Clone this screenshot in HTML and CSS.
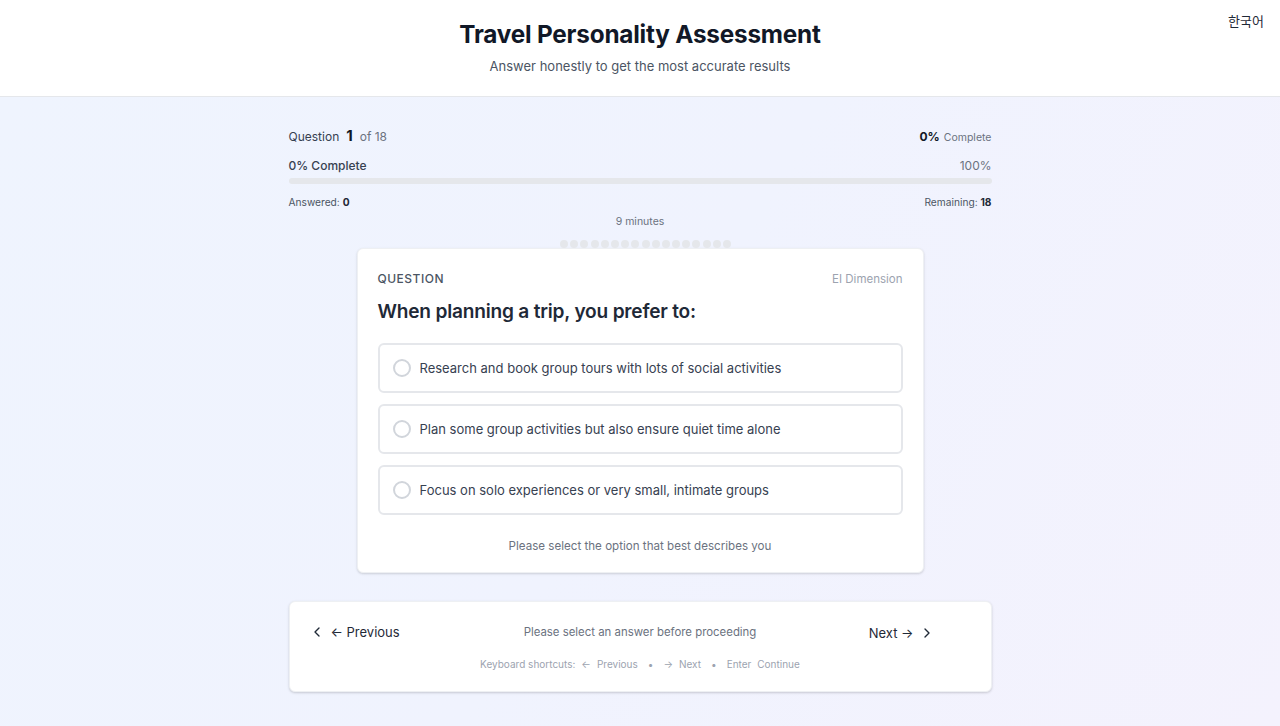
FILE: index.html
```html
<!DOCTYPE html>
<html lang="en">
<head>
<meta charset="utf-8">
<title>Travel Personality Assessment</title>
<link rel="stylesheet" href="styles.css">
</head>
<body>
<header class="site-header">
  <h1 class="title">Travel Personality Assessment</h1>
  <p class="subtitle">Answer honestly to get the most accurate results</p>
  <button class="lang">한국어</button>
</header>
<main class="main">
  <div class="container">
    <div class="row row-top">
      <div class="q-count"><span class="q-label">Question</span><span class="q-num">1</span><span class="q-of">of 18</span></div>
      <div class="pct"><span class="pct-num">0%</span><span class="pct-label">Complete</span></div>
    </div>
    <div class="row row-progress">
      <span class="prog-left">0% Complete</span>
      <span class="prog-right">100%</span>
    </div>
    <div class="bar"><div class="bar-fill" style="width:0%"></div></div>
    <div class="row row-stats">
      <span>Answered: <b>0</b></span>
      <span>Remaining: <b>18</b></span>
    </div>
    <div class="time">9 minutes</div>
    <div class="dots">
      <span></span><span></span><span></span><span></span><span></span><span></span><span></span><span></span><span></span><span></span><span></span><span></span><span></span><span></span><span></span><span></span><span></span>
    </div>
    <section class="card">
      <div class="card-head">
        <span class="eyebrow">QUESTION</span>
        <span class="dim">EI Dimension</span>
      </div>
      <h2 class="question">When planning a trip, you prefer to:</h2>
      <div class="options">
        <label class="option"><span class="radio"></span><span>Research and book group tours with lots of social activities</span></label>
        <label class="option"><span class="radio"></span><span>Plan some group activities but also ensure quiet time alone</span></label>
        <label class="option"><span class="radio"></span><span>Focus on solo experiences or very small, intimate groups</span></label>
      </div>
      <p class="hint">Please select the option that best describes you</p>
    </section>
    <nav class="nav-card">
      <div class="nav-row">
        <button class="nav-btn prev">
          <svg width="16" height="16" viewBox="0 0 24 24" fill="none" stroke="currentColor" stroke-width="2" stroke-linecap="round" stroke-linejoin="round"><path d="M15 18l-6-6 6-6"/></svg>
          <span>← Previous</span>
        </button>
        <span class="nav-msg">Please select an answer before proceeding</span>
        <div class="nav-right">
          <button class="nav-btn next">
            <span>Next →</span>
            <svg width="16" height="16" viewBox="0 0 24 24" fill="none" stroke="currentColor" stroke-width="2" stroke-linecap="round" stroke-linejoin="round"><path d="M9 18l6-6-6-6"/></svg>
          </button>
        </div>
      </div>
      <div class="shortcuts">
        <span>Keyboard shortcuts:</span>
        <span>←</span><span>Previous</span><span class="sep">•</span>
        <span>→</span><span>Next</span><span class="sep">•</span>
        <span>Enter</span><span>Continue</span>
      </div>
    </nav>
  </div>
</main>
</body>
</html>
```
FILE: styles.css
```css
* { box-sizing: border-box; }
html, body { margin: 0; padding: 0; }
body {
  font-family: Inter, "Noto Sans", "Noto Sans CJK KR", sans-serif;
  color: #1f2937;
  background: #f7f7fe;
  min-height: 726px;
}
.site-header {
  position: relative;
  background: #fff;
  border-bottom: 1px solid #e5e7eb;
  height: 97px;
  text-align: center;
  padding-top: 18px;
}
.title {
  margin: 0;
  font-size: 24.3px;
  font-weight: 700;
  color: #111827;
  line-height: 32px;
  letter-spacing: -0.2px;
}
.subtitle {
  margin: 6px 0 0;
  font-size: 13px;
  color: #4b5563;
  line-height: 20px;
}
.lang {
  position: absolute;
  top: 11px;
  right: 16px;
  background: none;
  border: 0;
  font-size: 13px;
  color: #1f2937;
  padding: 0;
  font-family: "Noto Sans CJK KR", sans-serif;
}
.main {
  background: linear-gradient(120deg, #eff4fe 0%, #f0f3fe 50%, #f4f2fd 100%);
  padding: 28px 0 34px;
}
.container {
  width: 703px;
  margin: 0 auto;
}
.row {
  display: flex;
  justify-content: space-between;
  align-items: baseline;
}
.row-top { height: 22px; }
.q-label { font-size: 12px; color: #374151; }
.q-num { font-size: 15px; font-weight: 700; color: #111827; margin: 0 7px 0 7px; }
.q-of { font-size: 12px; color: #6b7280; }
.pct-num { font-size: 12px; font-weight: 700; color: #111827; margin-right: 4px; }
.pct-label { font-size: 10.5px; color: #6b7280; }
.row-progress { margin-top: 11px; }
.prog-left { font-size: 12px; font-weight: 500; color: #374151; }
.prog-right { font-size: 12px; color: #6b7280; }
.bar {
  margin-top: 5px;
  height: 6px;
  border-radius: 4px;
  background: #e5e7eb;
  overflow: hidden;
}
.bar-fill { height: 100%; background: #3b82f6; }
.row-stats {
  margin-top: 12px;
  font-size: 10.2px;
  color: #4b5563;
}
.row-stats b { color: #1f2937; font-weight: 700; }
.time {
  text-align: center;
  font-size: 10.5px;
  color: #6b7280;
  margin-top: 7px;
}
.dots {
  display: flex;
  justify-content: center;
  gap: 2.2px;
  margin-top: 12px;
  padding-left: 11px;
}
.dots span {
  width: 8px;
  height: 8px;
  border-radius: 50%;
  background: #e5e7eb;
}
.card {
  width: 567px;
  margin: 0 auto;
  background: #fff;
  border-radius: 6px;
  box-shadow: 0 1px 3px rgba(0,0,0,0.10), 0 1px 2px rgba(0,0,0,0.06);
  border: 1px solid #eef0f3;
  padding: 22px 20px 17px;
}
.card-head {
  display: flex;
  justify-content: space-between;
  align-items: baseline;
}
.eyebrow {
  font-size: 12px;
  letter-spacing: 0.5px;
  color: #4b5563;
  font-weight: 500;
}
.dim { font-size: 11.5px; color: #9ca3af; }
.question {
  margin: 11px 0 0;
  font-size: 19.1px;
  font-weight: 600;
  color: #1f2937;
  line-height: 28px;
  letter-spacing: -0.2px;
}
.options {
  margin-top: 18px;
  display: flex;
  flex-direction: column;
  gap: 11px;
}
.option {
  display: flex;
  align-items: center;
  height: 50px;
  border: 2px solid #e5e7eb;
  border-radius: 6px;
  padding: 0 13px;
  font-size: 13px;
  color: #374151;
}
.radio {
  width: 18px;
  height: 18px;
  border: 2px solid #d1d5db;
  border-radius: 50%;
  margin-right: 9px;
  flex: none;
}
.hint {
  margin: 22px 0 0;
  text-align: center;
  font-size: 11.6px;
  color: #6b7280;
  line-height: 18px;
}
.nav-card {
  margin-top: 28px;
  background: #fff;
  border-radius: 6px;
  box-shadow: 0 1px 3px rgba(0,0,0,0.12), 0 1px 2px rgba(0,0,0,0.06);
  border: 1px solid #eef0f3;
  padding: 20px 0 21px;
}
.nav-row {
  display: grid;
  grid-template-columns: 1fr auto 1fr;
  align-items: center;
}
.nav-btn {
  display: inline-flex;
  align-items: center;
  background: none;
  border: 0;
  font-family: inherit;
  font-size: 13px;
  color: #1f2937;
  padding: 0;
  gap: 6px;
}
.prev { justify-self: start; margin-left: 19px; }
.nav-right { justify-self: end; margin-right: 56px; }
.next { gap: 5px; }
.nav-msg {
  font-size: 11.4px;
  color: #6b7280;
}
.shortcuts {
  margin-top: 16px;
  display: flex;
  justify-content: center;
  gap: 6px;
  font-size: 10px;
  color: #9ca3af;
}
.shortcuts .sep { margin: 0 4px; }
```
